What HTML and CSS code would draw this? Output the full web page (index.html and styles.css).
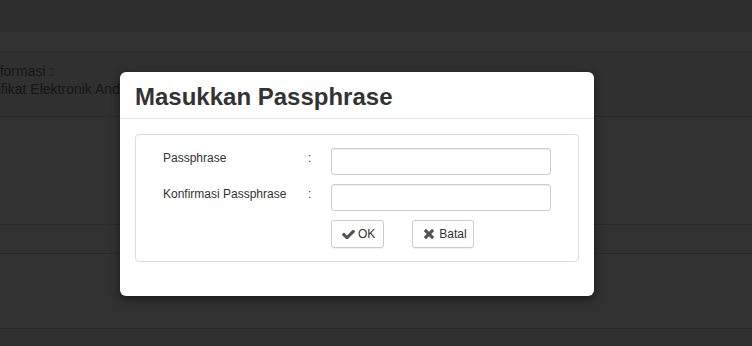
FILE: index.html
```html
<!DOCTYPE html>
<html lang="id">
<head>
  <meta charset="UTF-8">
  <title>Masukkan Passphrase</title>
  <link rel="stylesheet" href="styles.css">
</head>
<body>

  <div class="page">
    <div class="topbar"></div>
    <div class="subbar"></div>
    <div class="info">
      <p class="info-title">Informasi :</p>
      <p class="info-text">Sertifikat Elektronik Anda</p>
    </div>
    <div class="row row-tall"></div>
    <div class="row row-short"></div>
    <div class="row row-mid"></div>
  </div>

  <div class="modal">
    <div class="modal-header">
      <h2>Masukkan Passphrase</h2>
    </div>
    <div class="modal-body">
      <div class="panel">
        <form class="pass-form">
          <label class="pass-label" for="pass">Passphrase</label>
          <span class="pass-colon">:</span>
          <input class="pass-input" type="password" id="pass">

          <label class="pass-label" for="pass2">Konfirmasi Passphrase</label>
          <span class="pass-colon">:</span>
          <input class="pass-input" type="password" id="pass2">

          <div class="pass-actions">
            <button type="button" class="btn btn-ok">
              <svg class="icon-check" viewBox="121 390 1550 1030"><path d="M1671 566q0 40-28 68l-724 724-136 136q-28 28-68 28t-68-28l-136-136-362-362q-28-28-28-68t28-68l136-136q28-28 68-28t68 28l294 295 656-657q28-28 68-28t68 28l136 136q28 28 28 68z"/></svg>
              OK
            </button>
            <button type="button" class="btn btn-cancel">
              <svg class="icon-times" viewBox="110 366 1188 1188"><path d="M1298 1322q0 40-28 68l-136 136q-28 28-68 28t-68-28l-294-294-294 294q-28 28-68 28t-68-28l-136-136q-28-28-28-68t28-68l294-294-294-294q-28-28-28-68t28-68l136-136q28-28 68-28t68 28l294 294 294-294q28-28 68-28t68 28l136 136q28 28 28 68t-28 68l-294 294 294 294q28 28 28 68z"/></svg>
              Batal
            </button>
          </div>
        </form>
      </div>
    </div>
  </div>

</body>
</html>
```

FILE: styles.css
```css
body {
  margin: 0;
  font-family: "Liberation Sans", Arial, sans-serif;
  font-size: 12px;
  color: #333;
  background: #303030;
  overflow: hidden;
}

/* page behind the backdrop */
.page { height: 346px; }
.topbar { height: 32px; background: #2e2e2e; }
.subbar { height: 20px; background: #313131; border-bottom: 1px solid #2a2a2a; }
.info {
  height: 54px; padding-top: 9px;
  background: #303030; border-bottom: 1px solid #2a2a2a;
  font-size: 14px; line-height: 18px; color: #161616;
  white-space: nowrap;
}
.info p { margin: 0; }
.info-title { margin-left: -12px !important; }
.info-text { margin-left: -28px !important; }
.row { background: #313131; border-bottom: 1px solid #2a2a2a; }
.row-tall { height: 107px; }
.row-short { height: 28px; }
.row-mid { height: 74px; }

/* dialog */
.modal {
  position: absolute;
  left: 120px; top: 72px;
  width: 474px;
  background: #fff;
  border-radius: 6px;
  box-shadow: 0 3px 9px rgba(0,0,0,.5);
}
.modal-header {
  padding: 12px 15px 8px;
  border-bottom: 1px solid #e5e5e5;
}
.modal-header h2 {
  margin: 0;
  font-size: 24px; line-height: 26px;
  font-weight: bold; color: #333;
}
.modal-body { padding: 15px 15px 34px; }

.panel {
  border: 1px solid #ddd;
  border-radius: 4px;
  padding: 13px 0 14px 27px;
}
.pass-form {
  display: grid;
  grid-template-columns: 145px 23px 220px;
  grid-auto-rows: 27px;
  row-gap: 9px;
  align-items: start;
}
.pass-label, .pass-colon { line-height: 17px; padding-top: 2px; color: #333; }
.pass-input {
  box-sizing: border-box;
  width: 220px; height: 27px;
  margin: 0; padding: 4px 8px;
  border: 1px solid #ccc; border-radius: 3px;
  box-shadow: inset 0 1px 1px rgba(0,0,0,.075);
  font: inherit;
}
.pass-actions {
  grid-column: 3;
  display: flex; gap: 28px;
}

.btn {
  box-sizing: border-box;
  height: 28px;
  display: flex; align-items: center;
  padding: 0 8px 0 10px;
  background: #fff;
  border: 1px solid #ccc; border-radius: 3px;
  box-shadow: 0 1px 1px rgba(0,0,0,.06);
  font: inherit; font-size: 12px; color: #333;
  cursor: pointer;
}
.btn svg { fill: #555; flex-shrink: 0; }
.icon-check { width: 13px; height: 9px; margin-right: 3px; }
.icon-times { width: 10px; height: 10px; margin-right: 5px; }
.btn-cancel { padding: 0 6px 0 11px; }
```
